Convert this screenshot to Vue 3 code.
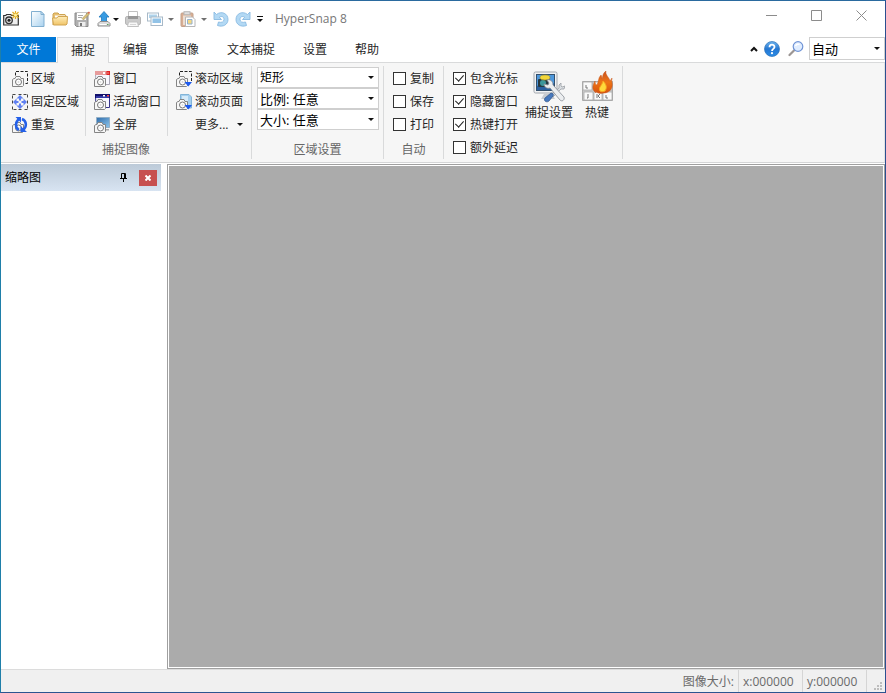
<script setup>
import { ref } from 'vue'

const tabs = ['捕捉', '编辑', '图像', '文本捕捉', '设置', '帮助']
const activeTab = ref('捕捉')

const quick = [
  { id: 'new', label: '新建' },
  { id: 'open', label: '打开' },
  { id: 'save', label: '保存' },
  { id: 'export', label: '导出', menu: 'tight' },
  { id: 'print', label: '打印', faded: true },
  { id: 'windows', label: '复制', menu: 'wide', faded: true },
  { id: 'paste', label: '粘贴', menu: 'wide', faded: true },
  { id: 'undo', label: '撤消', faded: true },
  { id: 'redo', label: '重做', faded: true },
]

const captureColumns = [
  [
    { id: 'region', label: '区域' },
    { id: 'fixed', label: '固定区域' },
    { id: 'repeat', label: '重复' },
  ],
  [
    { id: 'window', label: '窗口' },
    { id: 'active', label: '活动窗口' },
    { id: 'full', label: '全屏' },
  ],
  [
    { id: 'scrollregion', label: '滚动区域' },
    { id: 'scrollpage', label: '滚动页面' },
    { id: '', label: '更多...', menu: true },
  ],
]

const regionSelects = [
  { name: '形状', value: '矩形', small: true },
  { name: '比例', value: '比例: 任意' },
  { name: '大小', value: '大小: 任意' },
]

const autoChecks = ref([
  { label: '复制', on: false },
  { label: '保存', on: false },
  { label: '打印', on: false },
])
const optionChecks = ref([
  { label: '包含光标', on: true },
  { label: '隐藏窗口', on: true },
  { label: '热键打开', on: true },
  { label: '额外延迟', on: false },
])
</script>

<template>
  <div class="window">
    <svg class="defs" aria-hidden="true">
      <defs>
        <linearGradient id="gBlue" x1="0" y1="0" x2="1" y2="1">
          <stop offset="0" stop-color="#fff" /><stop offset="1" stop-color="#a9d2ef" />
        </linearGradient>
        <linearGradient id="gFolder" x1="0" y1="0" x2="0" y2="1">
          <stop offset="0" stop-color="#ffedb8" /><stop offset="1" stop-color="#f0c468" />
        </linearGradient>
        <linearGradient id="gHelp" x1="0" y1="0" x2="0" y2="1">
          <stop offset="0" stop-color="#6db4ee" /><stop offset="0.5" stop-color="#2577d2" /><stop offset="1" stop-color="#2b8ce6" />
        </linearGradient>
        <linearGradient id="gScreen" x1="0" y1="0" x2="1" y2="1">
          <stop offset="0" stop-color="#2f6cab" /><stop offset="1" stop-color="#8ec6ec" />
        </linearGradient>
        <linearGradient id="gFlame" x1="0" y1="0" x2="0" y2="1">
          <stop offset="0" stop-color="#c8501c" /><stop offset="0.5" stop-color="#ee7416" /><stop offset="1" stop-color="#d6520d" />
        </linearGradient>
      </defs>
      <symbol id="cam" viewBox="0 0 16 16">
        <path d="M.5 8.500 2 7.500h1l1-2h4l1 2h2.500v7l-1 1h-10z" fill="#f7f7f7" stroke="#858585" />
        <circle cx="6.500" cy="11" r="3" fill="#fff" stroke="#777" />
        <circle cx="6.500" cy="11" r="1" fill="#ddd" />
      </symbol>
      <symbol id="i-app" viewBox="0 0 16 16">
        <path d="M.7 4.500h2l1-1h4l1 1h6.600v9.500H.7z" fill="#eee" stroke="#333" stroke-width="1.200" />
        <circle cx="6" cy="9.300" r="3.300" fill="#ddd" stroke="#333" stroke-width="1.300" />
        <circle cx="6" cy="9.300" r="1.500" fill="#222" />
        <path d="M12.500 0v8M8.500 4h8M9.500 1l6 6M15.500 1l-6 6" stroke="#e3ae22" stroke-width="1.200" />
        <circle cx="12.500" cy="4" r="1.500" fill="#fff3a0" />
      </symbol>
      <symbol id="i-new" viewBox="0 0 16 16">
        <path d="M1.500.5h9.500l3 3v12H1.500z" fill="url(#gBlue)" stroke="#81afd0" />
        <path d="M11 .5v3h3z" fill="#d5eafa" stroke="#81afd0" />
      </symbol>
      <symbol id="i-open" viewBox="0 0 16 16">
        <path d="M1 14V3l1-1h4l1.500 1.500H13l1 1.500v4" fill="#e9c071" stroke="#cda351" />
        <path d="M3 4.500h10V8H3z" fill="#fff" />
        <path d="M.5 7H5l1-1.500h9.500L15 13l-1 1H1.500z" fill="url(#gFolder)" stroke="#d1a552" />
      </symbol>
      <symbol id="i-save" viewBox="0 0 16 16">
        <path d="M1 2h13v13.500H2.500L1 14z" fill="#b0b0b0" stroke="#8b8b8b" />
        <path d="M3 2h9v7H3z" fill="#fff" />
        <path d="M4 4.500h5M4 6.500h4" stroke="#aaa" />
        <path d="M4.500 11h7v4.500h-7z" fill="#ededed" /><path d="M6 12h2v3H6z" fill="#777" />
        <path d="m8 7.500 6-6 1.500 1.500-6 6z" fill="#d9c17a" stroke="#998a57" stroke-width=".5" />
        <path d="m13.500 1.500 1.500-1 1 1-1 1.500z" fill="#d86850" />
      </symbol>
      <symbol id="i-export" viewBox="0 0 16 16">
        <path d="M8 .5 13 6H10.500v4.500h-5V6H3z" fill="#389be2" stroke="#1f78bd" stroke-width=".8" />
        <path d="M4 10.500h8l2 2v2.500H2v-2.500z" fill="#ddd" stroke="#8e8e8e" />
        <path d="M3.500 13.500h7" stroke="#fff" /><path d="M11 13.500h1.500" stroke="#58a45b" />
      </symbol>
      <symbol id="i-print" viewBox="0 0 16 16">
        <path d="M3.500.5h9v6h-9z" fill="#fff" stroke="#999" />
        <rect x=".5" y="5.500" width="15" height="8" rx="1.500" fill="#aaa" stroke="#858585" />
        <path d="M3 5h10v3H3z" fill="#555" />
        <path d="M3.500 11h9l1 4.500h-11z" fill="#f4f4f4" stroke="#999" /><path d="M5 13.500h6" stroke="#bbb" />
      </symbol>
      <symbol id="i-windows" viewBox="0 0 16 16">
        <rect x=".5" y="2" width="11" height="8" fill="#fff" stroke="#6f8ca4" /><path d="M2 3.500h8V7H2z" fill="#7bb8e0" />
        <rect x="4" y="6" width="11.500" height="8.500" fill="#fff" stroke="#6f8ca4" /><path d="M5.500 7.500H14V12H5.500z" fill="#4b9cd8" />
      </symbol>
      <symbol id="i-paste" viewBox="0 0 16 16">
        <rect x="1" y="2" width="12" height="13.500" rx="1" fill="#c07a4d" stroke="#9c6440" />
        <rect x="4" y=".7" width="6" height="3" fill="#ccc" stroke="#888" /><path d="M3 4.500h8V14H3z" fill="#e0c9b5" />
        <path d="M5.500 6h7l2.500 2.500v7H5.500z" fill="#fff" stroke="#888" /><path d="M7.500 8.500H12V13H7.500z" fill="#f0c030" stroke="#4f7fae" />
      </symbol>
      <symbol id="i-undo" viewBox="0 0 16 16">
        <path d="M1 1v7.500h7.500L6.300 6.300C9 4.500 11 6 11 8.500S8.500 12 5.500 11L4.500 14.500C10 16.500 15 13.500 15 8.500 15 2.500 8.500-.5 3.500 3.500z" fill="#82c0ee" stroke="#3d8fd0" stroke-width=".9" stroke-linejoin="round" />
      </symbol>
      <symbol id="i-redo" viewBox="0 0 16 16">
        <path transform="matrix(-1 0 0 1 16 0)" d="M1 1v7.500h7.500L6.300 6.300C9 4.500 11 6 11 8.500S8.500 12 5.500 11L4.500 14.500C10 16.500 15 13.500 15 8.500 15 2.500 8.500-.5 3.500 3.500z" fill="#82c0ee" stroke="#3d8fd0" stroke-width=".9" stroke-linejoin="round" />
      </symbol>
      <symbol id="i-region" viewBox="0 0 16 16">
        <path d="M3.500 4.500v-4h12v12H13" fill="none" stroke="#222" stroke-dasharray="3 1.500" /><use href="#cam" width="16" height="16" />
      </symbol>
      <symbol id="i-fixed" viewBox="0 0 16 16">
        <rect x=".5" y=".5" width="15" height="15" fill="none" stroke="#444" stroke-dasharray="3 3 3 2 3 1" />
        <path d="m8 1 3.500 3.500H9v2H7v-2H4.500zM8 15l3.500-3.500H9v-2H7v2H4.500zM1 8l3.500-3.500V7h2v2h-2v2.500zM15 8l-3.500-3.500V7h-2v2h2v2.500z" fill="#5f80f2" />
      </symbol>
      <symbol id="i-repeat" viewBox="0 0 16 16">
        <use href="#cam" width="16" height="16" />
        <path d="M7 13C3 11 3 5 7 2M10 2c5 2 5 8 1 11" fill="none" stroke="#2460e8" stroke-width="2.500" />
        <path d="M3.500 0H9v5.500zM8.500 9v6H15z" fill="#2460e8" />
      </symbol>
      <symbol id="i-window" viewBox="0 0 16 16">
        <path d="M1.500 1.500h14v12H2z" fill="#f8f8ff" stroke="#a8a5b4" /><path d="M1 0h15v4H1z" fill="#e79c9c" />
        <path d="M9 1h2v2H9z" fill="#fff" /><path d="M12.500 0H16v4h-3.500z" fill="#e02222" /><path d="M13.500 1.500h1v1h-1z" fill="#fff" /><use href="#cam" width="16" height="16" />
      </symbol>
      <symbol id="i-active" viewBox="0 0 16 16">
        <path d="M1.500 1.500h14v12H2z" fill="#f8f8ff" stroke="#37348a" /><path d="M1 0h15v4H1z" fill="#12106c" /><path d="M2 3h13" stroke="#5560e0" />
        <path d="M9 1h2v1.500H9z" fill="#fff" /><path d="M13 1h2v1.500h-2z" fill="#f44" /><use href="#cam" width="16" height="16" />
      </symbol>
      <symbol id="i-full" viewBox="0 0 16 16">
        <path d="M2.500.5h13v10h-13z" fill="url(#gScreen)" stroke="#94b0c7" /><path d="M9 12h6v1.500H9z" fill="#aaa" /><use href="#cam" width="16" height="16" />
      </symbol>
      <symbol id="i-scrollregion" viewBox="0 0 16 16">
        <path d="M3.500 4.500v-4h12V11" fill="none" stroke="#222" stroke-dasharray="3 1.500" /><use href="#cam" width="16" height="16" />
        <path d="M8.500 11H16l-3.700 4.500z" fill="#1c5af0" />
      </symbol>
      <symbol id="i-scrollpage" viewBox="0 0 16 16">
        <path d="M4.500.5H13l2.500 2.500v11h-11z" fill="#a6d0ee" stroke="#82b4d8" /><path d="M6 2h6v5H6z" fill="#d6ebfa" /><use href="#cam" width="16" height="16" />
        <path d="M8.500 11H16l-3.700 4.500z" fill="#1c5af0" />
      </symbol>
      <symbol id="i-settings" viewBox="0 0 32 32">
        <path d="M11 23h8l3 5H8z" fill="#c7cbd0" />
        <rect x="1" y="1" width="23" height="21" rx="1.500" fill="#f1f2f4" stroke="#a1a6ac" />
        <rect x="3.500" y="3.500" width="18" height="16" fill="#4e98dd" stroke="#34506c" />
        <path d="m4 15 6-3 5 4 6-4v7H4z" fill="#2a60a0" />
        <rect x="5" y="8" width="12" height="8" rx="1" fill="#253840" /><circle cx="10" cy="12" r="3" fill="#3b969a" />
        <ellipse cx="12" cy="6.500" rx="5" ry="2.500" fill="#f2d639" stroke="#a68d21" stroke-width=".6" />
        <path d="m28 12-2 2v3l-8 7 2 2 8-8h3l1-3-3 1-1-1z" fill="#d9dde1" stroke="#9a9fa5" stroke-width=".8" />
        <path d="M18 22c2 0 3 2 2 3l-4 5c-2 2-6 0-4-3z" fill="#4779be" stroke="#2d5388" stroke-width=".7" />
        <path d="M14 9c3-1 6 1 6 5l11 12c1 3-2 5-4 3L17 17c-3 1-6-1-6-4l4 1 1-2z" fill="#eceef0" stroke="#858c93" stroke-width=".8" />
      </symbol>
      <symbol id="i-hotkey" viewBox="0 0 32 32">
        <path d="M1.500 10.500h30v19h-30z" fill="#ccc" stroke="#aaa" />
        <g fill="#fafafa" stroke="#aaa" stroke-width=".8"><rect x="2" y="11" width="9" height="8" /><rect x="12" y="11" width="9" height="8" /><rect x="22" y="11" width="9" height="8" /><rect x="3" y="21" width="9" height="8" /><rect x="13" y="21" width="8" height="8" /><rect x="22" y="21" width="9" height="8" /></g>
        <path d="M5 14v3h2M7 23v4H6M16 23v4m3-4-2 2 2 2M25 24v3h2" fill="none" stroke="#777" />
        <path d="M15 22C10 18 12 14 14 10c0 3 1 4 2 4 2-4 1-7 4-10 1 2 1 3 1 4 1-2 0-5 4-8-1 4 3 6 4 10l2-3c-1 4 1 5 0 9-1 4-5 6-8 6-4 1-7 0-9-2z" fill="url(#gFlame)" stroke="#c8581e" stroke-width=".5" />
        <path d="M19 20c-2-4 2-5 3-10 4 4 4 7 2 10-2 1-4 1-5 0z" fill="#ffd83b" stroke="#f7a51e" />
      </symbol>
      <symbol id="i-help" viewBox="0 0 16 16">
        <circle cx="8" cy="8" r="7.500" fill="url(#gHelp)" stroke="#2c71b8" stroke-width=".7" />
        <path d="M5.500 6.300C5.500 2.800 10.500 3 10.500 6c0 2-2.500 1.800-2.500 4" fill="none" stroke="#fff" stroke-width="1.800" />
        <circle cx="8" cy="12.200" r="1.100" fill="#fff" />
      </symbol>
      <symbol id="i-find" viewBox="0 0 16 16">
        <path d="m6 9.500-4.500 4.500" stroke="#9c9694" stroke-width="2.200" stroke-linecap="round" />
        <circle cx="10" cy="5.500" r="4.800" fill="#e0edff" stroke="#7094d6" stroke-width="1.200" />
        <path d="M7.500 5c1-2 3-2 4-1.500" fill="none" stroke="#fff" stroke-width="1.500" />
      </symbol>
    </svg>

    <header class="titlebar">
      <svg class="icon app"><use href="#i-app" /></svg>
      <button v-for="q in quick" :key="q.id" class="quick" :class="[q.menu, { faded: q.faded }]" :aria-label="q.label">
        <svg class="icon"><use :href="'#i-' + q.id" /></svg>
        <i v-if="q.menu" class="arrow"></i>
      </button>
      <button class="customize" aria-label="自定义"><i class="arrow"></i></button>
      <h1>HyperSnap 8</h1>
      <button class="control" aria-label="最小化"><svg viewBox="0 0 11 11"><path d="M0 5.500h11" /></svg></button>
      <button class="control" aria-label="最大化"><svg viewBox="0 0 11 11"><path d="M.5.5h10v10H.5z" /></svg></button>
      <button class="control" aria-label="关闭"><svg viewBox="0 0 11 11"><path d="m.5.5 10 10m0-10-10 10" /></svg></button>
    </header>

    <nav class="tabs">
      <button class="file">文件</button>
      <button v-for="t in tabs" :key="t" class="tab" :class="{ active: t === activeTab }" @click="activeTab = t">{{ t }}</button>
      <div class="tools">
        <button class="tool" aria-label="折叠功能区"><svg class="chevron" viewBox="0 0 8 6"><path d="M1 5l3-3 3 3" /></svg></button>
        <button class="tool" aria-label="帮助主题"><svg class="icon"><use href="#i-help" /></svg></button>
        <button class="tool" aria-label="缩放"><svg class="icon"><use href="#i-find" /></svg></button>
        <div class="combo zoom"><select aria-label="缩放比例"><option>自动</option></select><i class="arrow"></i></div>
      </div>
    </nav>

    <section class="ribbon">
      <div class="group">
        <div class="columns">
          <div v-for="(col, i) in captureColumns" :key="i" class="column">
            <button v-for="c in col" :key="c.label" class="command">
              <svg class="icon"><use v-if="c.id" :href="'#i-' + c.id" /></svg>
              <span>{{ c.label }}</span>
              <i v-if="c.menu" class="arrow"></i>
            </button>
          </div>
        </div>
        <div class="caption">捕捉图像</div>
      </div>
      <div class="group region">
        <div class="combos">
          <div v-for="s in regionSelects" :key="s.name" class="combo" :class="{ small: s.small }">
            <select :aria-label="s.name"><option>{{ s.value }}</option></select><i class="arrow"></i>
          </div>
        </div>
        <div class="caption">区域设置</div>
      </div>
      <div class="group">
        <div class="checks">
          <label v-for="c in autoChecks" :key="c.label"><input v-model="c.on" type="checkbox">{{ c.label }}</label>
        </div>
        <div class="caption">自动</div>
      </div>
      <div class="group options">
        <div class="checks">
          <label v-for="c in optionChecks" :key="c.label"><input v-model="c.on" type="checkbox">{{ c.label }}</label>
        </div>
        <button class="large"><svg><use href="#i-settings" /></svg>捕捉设置</button>
        <button class="large"><svg><use href="#i-hotkey" /></svg>热键</button>
      </div>
    </section>

    <main class="workspace">
      <aside class="panel">
        <div class="panel-head">
          <h2>缩略图</h2>
          <button class="pin" aria-label="固定"><svg viewBox="0 0 7 9"><path d="M1.500 5V.5h4V5M4.500 1v4M0 5.500h7M3.500 6v3" /></svg></button>
          <button class="close" aria-label="关闭面板"><svg viewBox="0 0 6 6"><path d="m.5.5 5 5m0-5-5 5" /></svg></button>
        </div>
      </aside>
      <div class="canvas"></div>
    </main>

    <footer class="status">
      <span>图像大小:</span>
      <span>x:000000</span>
      <span>y:000000</span>
      <svg class="grip" viewBox="0 0 8 8"><path d="M6 0h2v2H6zM3 3h2v2H3zM6 3h2v2H6zM0 6h2v2H0zM3 6h2v2H3zM6 6h2v2H6z" /></svg>
    </footer>
  </div>
</template>

<style>
body {
  margin: 0;
}
</style>

<style scoped>
.window {
  display: flex;
  flex-direction: column;
  box-sizing: border-box;
  min-height: 100vh;
  border: 1px solid;
  border-color: #2a6a9f #2b4f90 #2b5590 #1f7fa9;
  background: #fff;
  color: #262626;
  font: 12px/16px "Open Sans", "Noto Sans CJK SC", sans-serif;
}
.defs {
  position: absolute;
  width: 0;
  height: 0;
}
button {
  padding: 0;
  border: 0;
  background: none;
  color: inherit;
  font: inherit;
}
h1,
h2 {
  margin: 0;
  font: inherit;
}
.icon {
  flex: none;
  width: 16px;
  height: 16px;
}
.arrow {
  flex: none;
  width: 0;
  height: 0;
  border: 3px solid transparent;
  border-top-color: #111;
  border-bottom: 0;
}

.titlebar {
  display: flex;
  align-items: center;
  height: 36px;
  padding-right: 1px;
}
.app {
  margin: 0 8px 0 2px;
}
.quick {
  display: flex;
  align-items: center;
  box-sizing: border-box;
  width: 22px;
  height: 22px;
  padding-left: 3px;
}
.quick.tight {
  width: 29px;
  gap: 1px;
}
.quick.wide {
  width: 33px;
  gap: 5px;
}
.faded {
  opacity: 0.6;
}
.customize {
  display: flex;
  flex-direction: column;
  align-items: center;
  gap: 2px;
  width: 12px;
}
.customize::before {
  content: "";
  width: 6px;
  height: 1px;
  background: #111;
}
.titlebar h1 {
  flex: 1;
  margin-left: 9px;
  color: #777;
}
.control {
  display: flex;
  justify-content: center;
  align-items: center;
  width: 45px;
  height: 28px;
  align-self: flex-start;
}
.control svg {
  width: 11px;
  height: 11px;
  fill: none;
  stroke: #8c8c8c;
}

.tabs {
  display: flex;
  align-items: stretch;
  height: 26px;
  box-shadow: inset 0 -1px #d9dadb;
}
.file {
  width: 55px;
  margin: 0 1px 1px 0;
  background: #0078d7;
  color: #fff;
}
.tab {
  padding: 0 14px;
}
.tab.active {
  padding: 0 13px;
  border: 1px solid #d9dadb;
  border-bottom: 0;
  background: #f6f6f6;
}
.tools {
  display: flex;
  align-items: center;
  align-self: flex-start;
  height: 23px;
  margin-left: auto;
}
.tool {
  display: flex;
  margin-right: 8px;
}
.tool + .tool + .tool {
  margin-right: 5px;
}
.chevron {
  width: 8px;
  height: 6px;
  margin-right: -2px;
  fill: none;
  stroke: #111;
  stroke-width: 2;
}
.combo {
  position: relative;
  display: flex;
  align-items: center;
  box-sizing: border-box;
  height: 21px;
  border: 1px solid #cfcfcf;
  background: #fff;
}
.combo select {
  appearance: none;
  width: 100%;
  height: 100%;
  padding: 0 14px 0 2px;
  border: 0;
  background: none;
  color: #000;
  font: inherit;
  font-size: 13px;
}
.combo.small select {
  font-size: 12px;
}
.combo .arrow {
  position: absolute;
  right: 4px;
  pointer-events: none;
}
.combo.zoom {
  width: 76px;
  height: 23px;
}

.ribbon {
  display: flex;
  align-items: stretch;
  box-sizing: border-box;
  height: 100px;
  padding: 3px 0;
  border-bottom: 1px solid #d4d5d6;
  border-right: 1px solid #e2e2e2;
  background: #f6f6f6;
}
.group {
  display: flex;
  flex-direction: column;
  justify-content: space-between;
  box-sizing: border-box;
  padding-top: 1px;
  border-right: 1px solid #d9dadb;
}
.columns {
  display: flex;
}
.column {
  display: flex;
  flex-direction: column;
  padding: 0 6px 0 8px;
}
.column:first-child {
  padding-left: 11px;
}
.column:last-child {
  padding-right: 8px;
}
.column + .column {
  border-left: 1px solid #d9dadb;
}
.command {
  display: flex;
  align-items: center;
  gap: 3px;
  height: 23px;
  white-space: nowrap;
}
.command .arrow {
  margin-left: auto;
}
.caption {
  height: 17px;
  color: #666;
  text-align: center;
}
.region {
  width: 132px;
}
.combos {
  padding: 0 4px 0 5px;
}
.checks {
  padding: 0 9px;
}
.checks label {
  display: flex;
  align-items: center;
  gap: 4px;
  height: 23px;
  white-space: nowrap;
}
.checks input {
  appearance: none;
  display: flex;
  justify-content: center;
  box-sizing: border-box;
  width: 13px;
  height: 13px;
  margin: 0;
  border: 1px solid #333;
  background: #fff;
}
.checks input:checked::after {
  content: "";
  width: 4px;
  height: 7px;
  border: solid #222;
  border-width: 0 1px 1px 0;
  transform: rotate(42deg);
}
.options {
  flex-direction: row;
  justify-content: flex-start;
  padding-right: 5px;
}
.options .checks {
  padding-right: 3px;
}
.large {
  display: flex;
  flex-direction: column;
  align-items: center;
  align-self: flex-start;
  gap: 2px;
  min-width: 40px;
  padding: 4px 4px 0;
}
.large + .large {
  padding: 4px 0 0;
}
.large svg {
  width: 32px;
  height: 32px;
}

.workspace {
  display: flex;
  flex: 1;
  gap: 6px;
  padding: 1px 0 0;
}
.panel {
  flex: none;
  width: 160px;
}
.panel-head {
  display: flex;
  align-items: center;
  height: 27px;
  padding: 0 4px;
  background: linear-gradient(#bccad8, #d8e4f2);
  color: #000;
}
.panel-head h2 {
  flex: 1;
}
.pin {
  display: flex;
  margin-right: 12px;
}
.pin svg {
  width: 7px;
  height: 9px;
  fill: none;
  stroke: #000;
}
.close {
  display: grid;
  place-items: center;
  width: 18px;
  height: 16px;
  background: #c75050;
}
.close svg {
  width: 6px;
  height: 6px;
  stroke: #fff;
  stroke-width: 2;
}
.canvas {
  flex: 1;
  border: 1px solid #a0a0a0;
  box-shadow: inset 0 0 0 1px #fff;
  background: #ababab;
}

.status {
  display: flex;
  justify-content: flex-end;
  align-items: stretch;
  box-sizing: border-box;
  height: 23px;
  border-top: 1px solid #dcdcdc;
  background: #f0f0f0;
  color: #6a6a6a;
  line-height: 23px;
}
.status span {
  box-sizing: border-box;
  min-width: 64px;
  padding: 0 4px;
  border-right: 1px solid #d5d5d5;
}
.status span:first-child {
  text-align: right;
}
.grip {
  align-self: flex-end;
  width: 8px;
  height: 8px;
  margin: 0 3px 2px 7px;
  fill: #bdbdbd;
}
</style>
